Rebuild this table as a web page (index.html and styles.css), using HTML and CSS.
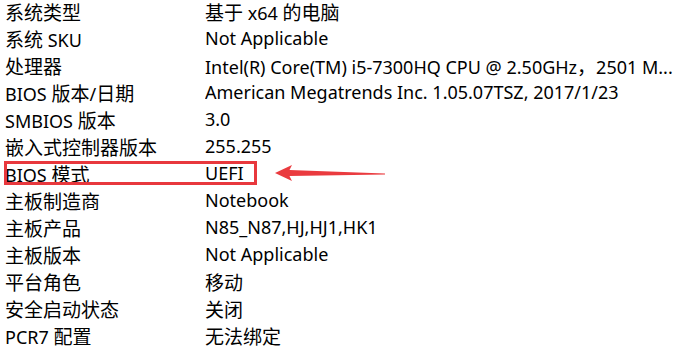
FILE: index.html
```html
<!DOCTYPE html>
<html lang="zh-CN">
<head>
    <meta charset="UTF-8">
    <title>系统信息</title>
    <link rel="stylesheet" href="styles.css">
</head>
<body>
    <div class="info-list">
        <div class="info-row"><span class="label"><span class="zh">系统类型</span></span><span class="value"><span class="zh">基于</span> x64 <span class="zh">的电脑</span></span></div>
        <div class="info-row"><span class="label"><span class="zh">系统</span> SKU</span><span class="value">Not Applicable</span></div>
        <div class="info-row"><span class="label"><span class="zh">处理器</span></span><span class="value">Intel(R) Core(TM) i5-7300HQ CPU @ 2.50GHz<span class="zh">，</span>2501 M...</span></div>
        <div class="info-row"><span class="label">BIOS <span class="zh">版本</span>/<span class="zh">日期</span></span><span class="value">American Megatrends Inc. 1.05.07TSZ, 2017/1/23</span></div>
        <div class="info-row"><span class="label">SMBIOS <span class="zh">版本</span></span><span class="value">3.0</span></div>
        <div class="info-row"><span class="label"><span class="zh">嵌入式控制器版本</span></span><span class="value">255.255</span></div>
        <div class="info-row marked">
            <span class="label">BIOS <span class="zh">模式</span></span><span class="value">UEFI</span>
            <svg class="arrow" width="120" height="27" viewBox="0 0 120 27">
                <path d="M5 13 L22 5 L19.5 10 L115 13.4 L115 14.4 L19.5 16 L22 21 Z" fill="#ea3b3f"/>
            </svg>
        </div>
        <div class="info-row"><span class="label"><span class="zh">主板制造商</span></span><span class="value">Notebook</span></div>
        <div class="info-row"><span class="label"><span class="zh">主板产品</span></span><span class="value">N85_N87,HJ,HJ1,HK1</span></div>
        <div class="info-row"><span class="label"><span class="zh">主板版本</span></span><span class="value">Not Applicable</span></div>
        <div class="info-row"><span class="label"><span class="zh">平台角色</span></span><span class="value"><span class="zh">移动</span></span></div>
        <div class="info-row"><span class="label"><span class="zh">安全启动状态</span></span><span class="value"><span class="zh">关闭</span></span></div>
        <div class="info-row"><span class="label">PCR7 <span class="zh">配置</span></span><span class="value"><span class="zh">无法绑定</span></span></div>
    </div>
</body>
</html>
```

FILE: styles.css
```css
body {
    margin: 0;
    background: #fff;
    color: #000;
    font-family: "Noto Sans", "Noto Sans CJK SC", sans-serif;
    font-size: 18px;
    overflow: hidden;
}

.info-list {
    padding-left: 5px;
}

.info-row {
    display: grid;
    grid-template-columns: 200px 1fr;
    height: 27px;
    line-height: 23px;
    white-space: nowrap;
}

.info-row .value {
    overflow: hidden;
}

/* chinese glyphs run a little larger than the latin ones */
.zh {
    font-family: "Noto Sans CJK SC", sans-serif;
    font-size: 19px;
}

/* red highlight box + arrow */
.marked {
    position: relative;
}

.marked::after {
    content: "";
    position: absolute;
    left: -1px;
    top: -1px;
    width: 247px;
    height: 18px;
    border: 3px solid #e8383d;
}

.arrow {
    position: absolute;
    left: 265px;
    top: -2px;
}
```
